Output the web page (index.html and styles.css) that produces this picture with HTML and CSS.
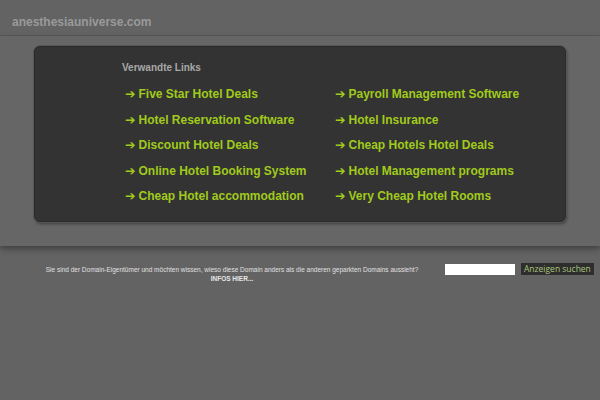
FILE: index.html
```html
<!DOCTYPE html>
<html>
<head>
<meta charset="utf-8">
<link rel="stylesheet" href="styles.css">
</head>
<body>
<div class="header"><span class="domain">anesthesiauniverse.com</span></div>
<div class="band">
  <div class="box">
    <div class="title">Verwandte Links</div>
    <div class="links">
      <a class="link"><span class="arr">➔</span>Five Star Hotel Deals</a>
      <a class="link"><span class="arr">➔</span>Payroll Management Software</a>
      <a class="link"><span class="arr">➔</span>Hotel Reservation Software</a>
      <a class="link"><span class="arr">➔</span>Hotel Insurance</a>
      <a class="link"><span class="arr">➔</span>Discount Hotel Deals</a>
      <a class="link"><span class="arr">➔</span>Cheap Hotels Hotel Deals</a>
      <a class="link"><span class="arr">➔</span>Online Hotel Booking System</a>
      <a class="link"><span class="arr">➔</span>Hotel Management programs</a>
      <a class="link"><span class="arr">➔</span>Cheap Hotel accommodation</a>
      <a class="link"><span class="arr">➔</span>Very Cheap Hotel Rooms</a>
    </div>
  </div>
</div>
<div class="footer">
  <div class="info">
    <div class="q">Sie sind der Domain-Eigentümer und möchten wissen, wieso diese Domain anders als die anderen geparkten Domains aussieht?</div>
    <div class="more">INFOS HIER...</div>
  </div>
  <div class="search">
    <span class="input"></span>
    <span class="btn">Anzeigen suchen</span>
  </div>
</div>
</body>
</html>
```
FILE: styles.css
```css
html, body { margin: 0; padding: 0; }
body {
  background: #636363;
  font-family: "Liberation Sans", Arial, sans-serif;
  width: 600px;
  height: 400px;
  overflow: hidden;
}
.header {
  height: 36px;
  border-bottom: 1px solid #575757;
  display: flex;
  align-items: center;
  padding-left: 12px;
  box-sizing: border-box;
}
.domain {
  color: #9a9a9a;
  font-size: 12px;
  font-weight: bold;
  margin-top: 9px;
}
.band {
  background: #666666;
  height: 210px;
  box-sizing: border-box;
  padding: 10px 0 0 34px;
  box-shadow: 0 3px 6px rgba(0,0,0,0.35);
  position: relative;
}
.box {
  width: 532px;
  height: 176px;
  box-sizing: border-box;
  background: #333333;
  border: 1px solid #2a2a2a;
  border-radius: 6px;
  box-shadow: 0 0 0 1px #575757, 1px 2px 3px rgba(0,0,0,0.4);
  padding: 14px 0 0 87px;
}
.title {
  color: #a8a8a8;
  font-size: 10px;
  font-weight: bold;
  height: 14px;
  line-height: 14px;
}
.links {
  display: grid;
  grid-template-columns: 210px 1fr;
  grid-auto-rows: 25.5px;
  margin-top: 6px;
  padding-left: 3px;
}
.link {
  color: #a0ca1c;
  font-size: 12px;
  font-weight: bold;
  line-height: 25.5px;
  white-space: nowrap;
}
.arr {
  font-family: "DejaVu Sans", sans-serif;
  font-size: 12.5px;
  font-weight: bold;
  margin-right: 3px;
}
.footer {
  display: flex;
  padding-top: 19px;
}
.info {
  width: 464px;
  text-align: center;
  color: #e0e0e0;
  font-size: 6.5px;
}
.q { line-height: 9px; }
.more {
  font-weight: bold;
  color: #e8e8e8;
  line-height: 10px;
}
.search {
  display: flex;
  align-items: flex-start;
  margin-left: -19px;
  margin-top: -2px;
}
.input {
  display: block;
  width: 70px;
  height: 11px;
  background: #fff;
  margin-top: 1px;
}
.btn {
  display: block;
  margin-left: 6px;
  background: #2e2e2e;
  color: #a9c47a;
  font-family: "Open Sans", sans-serif;
  font-size: 8.5px;
  line-height: 12px;
  padding: 0 3px;
}
```
